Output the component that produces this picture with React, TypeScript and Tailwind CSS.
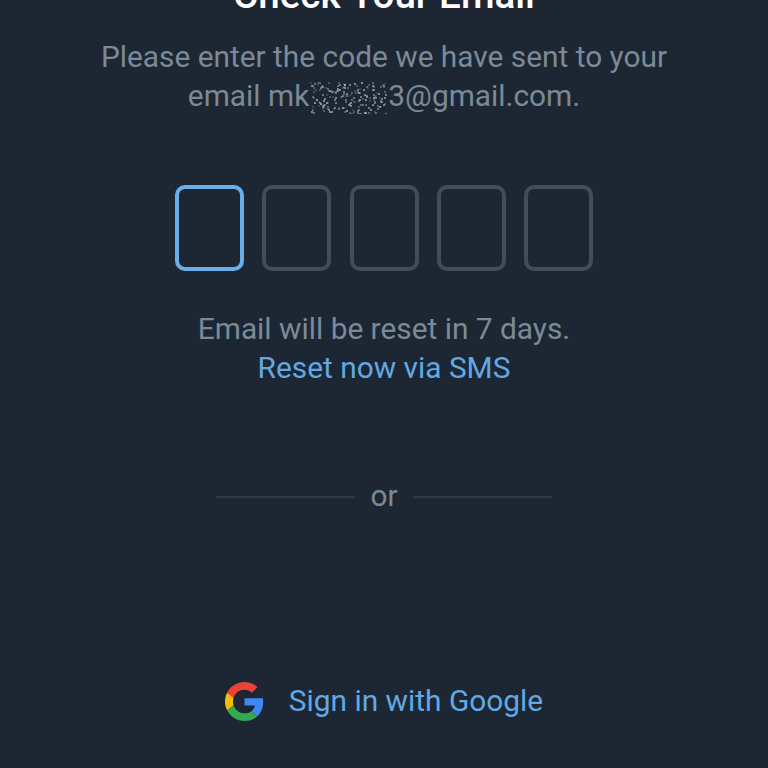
const boxes = [0, 1, 2, 3, 4]

// pixel noise over the hidden part of the address
const noise = Array.from({ length: 190 }, (_, i) => ({
  x: 1 + (i * 37 + (i * i) % 23) % 76,
  y: (i * 53 + (i * i) % 17) % 32,
  o: 0.2 + ((i * 7) % 10) / 18,
}))

function GoogleLogo() {
  return (
    <svg width="39" height="39" viewBox="0 0 48 48">
      <path fill="#EA4335" d="M24 9.5c3.54 0 6.71 1.22 9.21 3.6l6.85-6.85C35.9 2.38 30.47 0 24 0 14.62 0 6.51 5.38 2.56 13.22l7.98 6.19C12.43 13.72 17.74 9.5 24 9.5z" />
      <path fill="#4285F4" d="M46.98 24.55c0-1.57-.15-3.09-.38-4.55H24v9.02h12.94c-.58 2.96-2.26 5.48-4.78 7.18l7.73 6c4.51-4.18 7.09-10.36 7.09-17.65z" />
      <path fill="#FBBC05" d="M10.53 28.59c-.48-1.45-.76-2.99-.76-4.59s.27-3.14.76-4.59l-7.98-6.19C.92 16.46 0 20.12 0 24c0 3.88.92 7.54 2.56 10.78l7.97-6.19z" />
      <path fill="#34A853" d="M24 48c6.48 0 11.93-2.13 15.89-5.81l-7.73-6c-2.15 1.45-4.92 2.3-8.16 2.3-6.26 0-11.57-4.22-13.47-9.91l-7.98 6.19C6.51 42.62 14.62 48 24 48z" />
    </svg>
  )
}

export default function App() {
  return (
    <div className="h-[768px] overflow-hidden bg-[#1d2733] font-['Roboto',sans-serif] flex flex-col items-center">
      <h1 className="-mt-[24px] h-[38px] text-[38.6px] leading-[38px] font-medium text-white whitespace-nowrap">Check Your Email</h1>

      <p className="mt-[23px] text-center text-[29.85px] leading-[39px] text-[#7b8a99]">
        Please enter the code we have sent to your
        <br />
        email mk
        <svg width="79" height="32" className="inline-block align-[-8px]">
          {noise.map((d, i) => (
            <rect key={i} x={d.x} y={d.y} width="2" height="2" fill="#aab4be" opacity={d.o} />
          ))}
        </svg>
        3@gmail.com.
      </p>

      <div className="mt-[70px] flex gap-[18.25px]">
        {boxes.map(b => (
          <div
            key={b}
            className={`w-[69px] h-[86px] rounded-[10px] border-[4px] ${b === 0 ? 'border-[#6aaee8]' : 'border-[#414d5b]'}`}
          />
        ))}
      </div>

      <p className="mt-[38px] text-center text-[29.85px] leading-[39px] text-[#7b8a99]">
        Email will be reset in 7 days.
        <br />
        <span className="text-[#62a9e4]">Reset now via SMS</span>
      </p>

      <div className="mt-[89px] flex items-center">
        <div className="w-[139px] h-[2px] mt-[2px] bg-[#2f3a47]" />
        <span className="w-[58px] text-center text-[29.85px] leading-[39px] text-[#7b8a99]">or</span>
        <div className="w-[139px] h-[2px] mt-[2px] bg-[#2f3a47]" />
      </div>

      <div className="mt-[167px] flex items-start gap-[25px]">
        <GoogleLogo />
        <span className="-mt-[1px] text-[29.85px] leading-[40px] text-[#62a9e4]">Sign in with Google</span>
      </div>
    </div>
  )
}
